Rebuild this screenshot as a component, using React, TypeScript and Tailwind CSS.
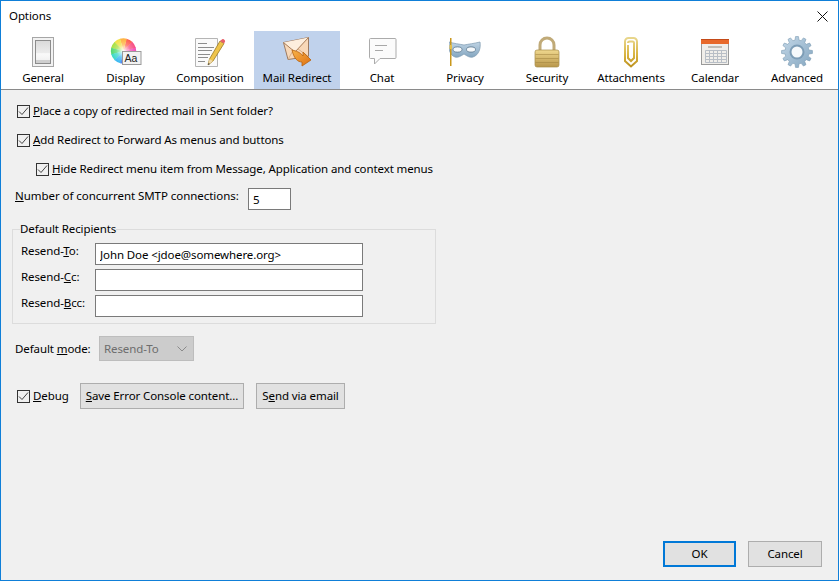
import type { ReactNode } from 'react';

const IconGeneral = () => (
  <svg width="32" height="32" viewBox="0 0 32 32">
    <defs>
      <linearGradient id="sw" x1="0" y1="0" x2="0" y2="1">
        <stop offset="0" stopColor="#dadada" />
        <stop offset="0.55" stopColor="#ececec" />
        <stop offset="0.57" stopColor="#fafafa" />
        <stop offset="1" stopColor="#ededed" />
      </linearGradient>
    </defs>
    <rect x="5.5" y="1.5" width="21" height="29" fill="#f2f2f2" stroke="#a6a6a6" />
    <rect x="8.5" y="4.5" width="15" height="23" fill="url(#sw)" stroke="#8c8c8c" />
    <rect x="9" y="24" width="14" height="3" fill="#cfcfcf" />
  </svg>
);

// hues run counter-clockwise from the upper right, as in the reference wheel
const WHEEL = ['#ff5a4a', '#ffb03c', '#f0e040', '#a8e040', '#50d870', '#38d8c8', '#38b8f0', '#4c80f0', '#7a5cf0', '#b84ce0', '#f04cb8', '#f84c80'];

const IconDisplay = () => (
  <svg width="32" height="32" viewBox="0 0 32 32">
    <defs>
      <radialGradient id="wh">
        <stop offset="0" stopColor="#fff" stopOpacity="0.95" />
        <stop offset="0.55" stopColor="#fff" stopOpacity="0.25" />
        <stop offset="1" stopColor="#fff" stopOpacity="0" />
      </radialGradient>
    </defs>
    {WHEEL.map((c, i) => {
      const a0 = -Math.PI / 4 - (i / 12) * Math.PI * 2;
      const a1 = a0 - (Math.PI * 2) / 12 - 0.03;
      const cx = 13.5;
      const cy = 15;
      const r = 12.7;
      return (
        <path
          key={c}
          fill={c}
          d={`M${cx} ${cy}L${cx + r * Math.cos(a0)} ${cy + r * Math.sin(a0)}A${r} ${r} 0 0 0 ${cx + r * Math.cos(a1)} ${cy + r * Math.sin(a1)}Z`}
        />
      );
    })}
    <circle cx="13.5" cy="15" r="12.7" fill="url(#wh)" />
    <rect x="12.5" y="15.5" width="18.5" height="13" fill="#f2f2f2" stroke="#9a9a9a" />
    <text x="14.5" y="26" fontSize="10.5" fontFamily="'Liberation Sans', sans-serif" fill="#222">Aa</text>
  </svg>
);

const IconComposition = () => (
  <svg width="32" height="32" viewBox="0 0 32 32">
    <path d="M1.5 2.5H23.5V30.5H1.5Z" fill="#fafafa" stroke="#b5b5b5" />
    <path d="M4 7.5h9M4 11.5h16M4 14.5h14M4 18.5h12M4 21.5h10M4 25.5h7" stroke="#8d8d8d" />
    <path d="M14 29l1.500-6L26 5l4 2.500L19 25Z" fill="#efc44a" stroke="#9b7a22" strokeWidth="0.8" />
    <path d="M14 29l1.500-6 3.500 2Z" fill="#f1d9a8" />
    <path d="M14 29l.5-2 1.500 1Z" fill="#333" />
    <path d="M26 5l4 2.500 1-1.700c.4-.9-.2-1.800-1-2.300s-1.800-.6-2.400.2Z" fill="#e8606a" />
  </svg>
);

const IconMail = () => (
  <svg width="32" height="32" viewBox="0 0 32 32">
    <defs>
      <linearGradient id="arr" x1="0" y1="0" x2="1" y2="1">
        <stop offset="0" stopColor="#f8b44a" />
        <stop offset="1" stopColor="#dd6e10" />
      </linearGradient>
    </defs>
    <path d="M2.500 6.500L27.500 1.500V20.500L7 23.500Z" fill="#f8d8b8" stroke="#9c7a60" />
    <path d="M2.500 6.500L14 16 27.500 1.500" fill="#fdeedd" stroke="#a87c58" />
    <path d="M7 23.500L12 14.500M27.500 20.500L17 13" fill="none" stroke="#d8b088" />
    <path d="M11 14c4 1 8 2 11 6v-4l8 8-9 6v-4c-4 0-8-3-10-12Z" fill="url(#arr)" stroke="#b8620e" strokeWidth="0.8" />
  </svg>
);

const IconChat = () => (
  <svg width="32" height="32" viewBox="0 0 32 32">
    <path d="M3.500 3.500Q3.500 2.500 4.500 2.500H29Q30 2.500 30 3.500V21.500Q30 22.500 29 22.500H14L8.500 28V22.500H4.500Q3.500 22.500 3.500 21.500Z" fill="#fbfbfb" stroke="#ababab" />
    <path d="M9 9.500h12M9 14.500h8" stroke="#a8a8a8" />
  </svg>
);

const IconPrivacy = () => (
  <svg width="32" height="32" viewBox="0 0 32 32">
    <defs>
      <linearGradient id="mask" x1="0" y1="0" x2="0" y2="1">
        <stop offset="0" stopColor="#c0d4e4" />
        <stop offset="1" stopColor="#84a6c0" />
      </linearGradient>
    </defs>
    <g transform="translate(-1 0)">
      <path d="M1 6c5 1.500 10 2 15 3 5-1 10-1.500 16-3 1 6-1 13-7 15-3 1-6-1-9-3-3 2-6 4-9 3C2 19.500 0 13 1 6Z" fill="url(#mask)" stroke="#7d9ab0" strokeWidth="0.7" />
      <ellipse cx="9.500" cy="13.500" rx="4.500" ry="2.600" fill="#f6f9fb" stroke="#4f6c82" strokeWidth="0.7" />
      <ellipse cx="23" cy="13.500" rx="4.500" ry="2.600" fill="#f6f9fb" stroke="#4f6c82" strokeWidth="0.7" />
      <rect x="2" y="2" width="1.500" height="28" fill="#c9971c" />
      <rect x="1.500" y="9" width="2.500" height="4" fill="#e5c04a" />
    </g>
  </svg>
);

const IconSecurity = () => (
  <svg width="32" height="32" viewBox="0 0 32 32">
    <defs>
      <linearGradient id="lk" x1="0" y1="0" x2="0" y2="1">
        <stop offset="0" stopColor="#f0d88e" />
        <stop offset="1" stopColor="#b8964a" />
      </linearGradient>
    </defs>
    <path d="M9 14V9a7 7 0 0 1 14 0V14" fill="none" stroke="#c0aa78" strokeWidth="3" />
    <rect x="4" y="14" width="24" height="17" rx="2" fill="url(#lk)" stroke="#a88c48" strokeWidth="0.7" />
    <path d="M4.500 18.500h23M4.500 22.500h23M4.500 26.500h23" stroke="#9a7c38" strokeOpacity="0.6" strokeWidth="0.8" />
  </svg>
);

const IconAttach = () => (
  <svg width="32" height="32" viewBox="0 0 32 32">
    <defs>
      <linearGradient id="clip" x1="0" y1="0" x2="0" y2="1">
        <stop offset="0" stopColor="#e8d68c" />
        <stop offset="0.6" stopColor="#d8b33e" />
        <stop offset="1" stopColor="#bd9220" />
      </linearGradient>
    </defs>
    <path d="M10 7V25l6 5.500L22 25V5.500a3.500 3.500 0 0 0-3.500-3.500h-5A3.500 3.500 0 0 0 10 5.500ZM13 7c0-1 .8-1.500 1.500-1.500h3c.8 0 1.500.5 1.500 1.500V22l-3 3-3-3V9" fill="none" stroke="url(#clip)" strokeWidth="2" />
  </svg>
);

const IconCalendar = () => (
  <svg width="32" height="32" viewBox="0 0 32 32">
    <rect x="2.500" y="3.500" width="27" height="25" fill="#f0eeea" stroke="#9a9a9a" />
    <rect x="2" y="3" width="28" height="5" fill="#e8692a" />
    <rect x="2" y="3" width="28" height="1" fill="#c44a18" />
    <path d="M9 11h14" stroke="#b0aca4" strokeWidth="1.500" />
    <path d="M6.500 14.500h21M6.500 17.500h21M6.500 20.500h21M6.500 23.500h21M6.500 26.500h21M6.500 14.500v12M10.500 14.500v12M14.500 14.500v12M18.500 14.500v12M22.500 14.500v12M27.500 14.500v12" stroke="#b8bec6" fill="none" />
  </svg>
);

// twelve-tooth gear outline
const gearPath = () => {
  const pts: string[] = [];
  for (let i = 0; i < 12; i++) {
    const a = (i / 12) * Math.PI * 2;
    const step = (Math.PI * 2) / 12;
    [[a - step * 0.32, 12], [a - step * 0.18, 15.5], [a + step * 0.18, 15.5], [a + step * 0.32, 12]].forEach(([t, r]) => {
      pts.push(`${(16 + r * Math.cos(t)).toFixed(2)} ${(16 + r * Math.sin(t)).toFixed(2)}`);
    });
  }
  return `M${pts.join('L')}Z`;
};

const IconAdvanced = () => (
  <svg width="32" height="32" viewBox="0 0 32 32">
    <defs>
      <linearGradient id="gear" x1="0" y1="0" x2="1" y2="1">
        <stop offset="0" stopColor="#c4d8e8" />
        <stop offset="1" stopColor="#84a6c0" />
      </linearGradient>
    </defs>
    <path d={gearPath()} fill="url(#gear)" stroke="#7b9ab2" strokeWidth="0.6" />
    <circle cx="16" cy="16" r="7.5" fill="#7d9db6" />
    <circle cx="16" cy="16" r="5.5" fill="#f6f9fb" />
  </svg>
);

const TABS = [
  { label: 'General', w: 'w-[84px]', icon: <IconGeneral /> },
  { label: 'Display', w: 'w-[81px]', icon: <IconDisplay /> },
  { label: 'Composition', w: 'w-[88px]', icon: <IconComposition /> },
  { label: 'Mail Redirect', w: 'w-[86px]', icon: <IconMail />, active: true },
  { label: 'Chat', w: 'w-[84px]', icon: <IconChat /> },
  { label: 'Privacy', w: 'w-[82px]', icon: <IconPrivacy /> },
  { label: 'Security', w: 'w-[82px]', icon: <IconSecurity /> },
  { label: 'Attachments', w: 'w-[86px]', icon: <IconAttach /> },
  { label: 'Calendar', w: 'w-[82px]', icon: <IconCalendar /> },
  { label: 'Advanced', w: 'w-[82px]', icon: <IconAdvanced /> },
];

const Check = ({ children, className = '' }: { children: ReactNode; className?: string }) => (
  <label className={`flex items-center gap-[3px] ${className}`}>
    <span className="flex h-[13px] w-[13px] items-center justify-center border border-[#333] bg-[#f0f0f0]">
      <svg width="11" height="11" viewBox="0 0 11 11">
        <path d="M1 5.500L4 8.500L10 1.500" fill="none" stroke="#444" />
      </svg>
    </span>
    <span className="whitespace-nowrap">{children}</span>
  </label>
);

const Field = ({ value = '', className = '' }: { value?: string; className?: string }) => (
  <input
    readOnly
    value={value}
    className={`h-[22px] border border-[#7a7a7a] bg-white px-[4px] text-[11.5px] tracking-[-0.1px] text-black outline-none ${className}`}
  />
);

const Button = ({ children, className = '' }: { children: ReactNode; className?: string }) => (
  <button className={`flex h-[26px] items-center justify-center whitespace-nowrap border border-[#adadad] bg-[#e1e1e1] ${className}`}>
    {children}
  </button>
);

export default function App() {
  return (
    <div className="flex h-[581px] w-[839px] flex-col border border-[#0f7fd8] bg-[#f0f0f0] font-['Noto_Sans','Open_Sans',sans-serif] text-[11.5px] leading-[16px] tracking-[-0.1px] text-black">
      <div className="bg-white">
        <div className="flex h-[30px] items-center justify-between pl-[8px] pr-[10px]">
          <span>Options</span>
          <svg width="11" height="11" viewBox="0 0 11 11">
            <path d="M.5.500l10 10M10.500.500l-10 10" stroke="#111" />
          </svg>
        </div>
        <div className="flex h-[59px] border-b border-[#8a8a8a]">
          {TABS.map((t) => (
            <div
              key={t.label}
              className={`flex flex-col items-center pt-[5px] ${t.w} ${t.active ? 'bg-[#c0d2ec]' : ''}`}
            >
              {t.icon}
              <span className="mt-[2px] whitespace-nowrap">{t.label}</span>
            </div>
          ))}
        </div>
      </div>

      <div className="flex flex-1 flex-col pt-[13px]">
        <Check className="ml-[16px]"><u>P</u>lace a copy of redirected mail in Sent folder?</Check>
        <Check className="ml-[16px] mt-[13px]"><u>A</u>dd Redirect to Forward As menus and buttons</Check>
        <Check className="ml-[35px] mt-[13px]"><u>H</u>ide Redirect menu item from Message, Application and context menus</Check>

        <div className="ml-[14px] mt-[11px] flex items-start">
          <span className="w-[233px] whitespace-nowrap tracking-[-0.05px]"><u>N</u>umber of concurrent SMTP connections:</span>
          <Field value="5" className="w-[43px]" />
        </div>

        <fieldset className="ml-[11px] mt-[11px] h-[103px] w-[424px] border border-[#dcdcdc] px-[8px] pt-[6px]">
          <legend className="-ml-[1px] px-0">Default Recipients</legend>
          <div className="flex flex-col gap-[4px]">
            {[
              { pre: 'Resend-', key: 'T', post: 'o:', value: 'John Doe <jdoe@somewhere.org>' },
              { pre: 'Resend-', key: 'C', post: 'c:', value: '' },
              { pre: 'Resend-', key: 'B', post: 'cc:', value: '' },
            ].map((r) => (
              <div key={r.key} className="flex items-start">
                <span className="w-[74px]">{r.pre}<u>{r.key}</u>{r.post}</span>
                <Field value={r.value} className="w-[268px]" />
              </div>
            ))}
          </div>
        </fieldset>

        <div className="ml-[14px] mt-[12px] flex items-center">
          <span className="w-[84px]">Default <u>m</u>ode:</span>
          <div className="flex h-[25px] w-[95px] items-center justify-between border border-[#bdbdbd] bg-[#cccccc] pl-[4px] pr-[3px] text-[#6d6d6d]">
            <span>Resend-To</span>
            <svg width="16" height="10" viewBox="0 0 16 10">
              <path d="M3.500 2.500L8 7L12.500 2.500" fill="none" stroke="#8a8a8a" />
            </svg>
          </div>
        </div>

        <div className="ml-[16px] mt-[22px] flex items-center">
          <Check className="w-[63px]"><u>D</u>ebug</Check>
          <Button className="w-[164px]"><span><u>S</u>ave Error Console content...</span></Button>
          <Button className="ml-[12px] w-[89px]"><span>S<u>e</u>nd via email</span></Button>
        </div>

        <div className="mt-auto mb-[13px] mr-[16px] flex justify-end gap-[12px]">
          <Button className="w-[73px] !border-2 !border-[#0078d7]">OK</Button>
          <Button className="w-[74px]">Cancel</Button>
        </div>
      </div>
    </div>
  );
}
